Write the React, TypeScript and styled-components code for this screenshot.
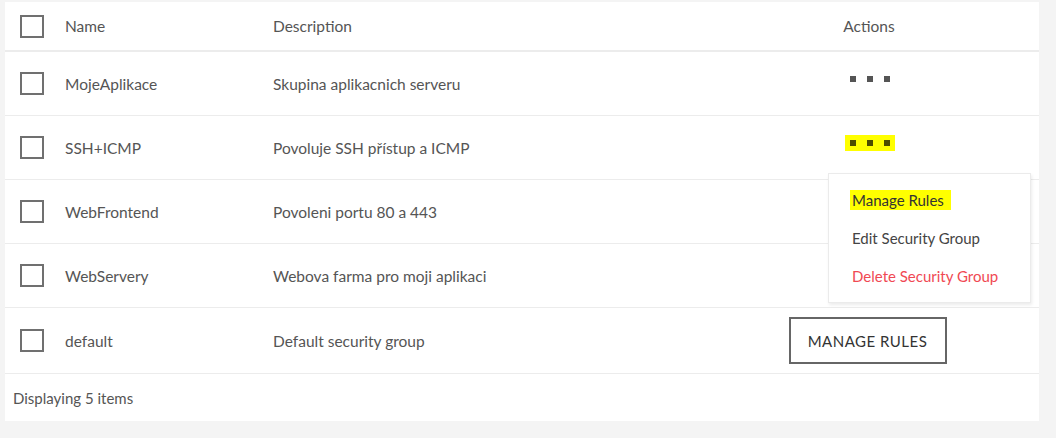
import React from "react";
import styled, { createGlobalStyle } from "styled-components";

const Global = createGlobalStyle`
  html, body { margin: 0; padding: 0; background: #f4f4f4; }
  body { font-family: Lato, "Open Sans", "Liberation Sans", sans-serif; color: #555; }
  * { box-sizing: border-box; }
`;

const Panel = styled.div`
  position: relative;
  margin: 2px 0 0 5px;
  width: 1034px;
  background: #fff;
`;

const Row = styled.div<{ $head?: boolean; $tall?: boolean }>`
  display: grid;
  grid-template-columns: 45px 208px 1fr 188px;
  align-items: center;
  padding: 0 76px 0 15px;
  height: ${(p) => (p.$head ? 50 : p.$tall ? 66 : 64)}px;
  border-bottom: ${(p) => (p.$head ? 2 : 1)}px solid #ececec;
  font-size: 15.5px;
`;

const Check = styled.span`
  display: block;
  width: 24px;
  height: 23px;
  border: 2px solid #707070;
`;

const Cell = styled.div`
  white-space: nowrap;
`;

const ActionCell = styled.div`
  display: flex;
  justify-content: center;
  align-items: center;
`;

const Dots = styled.span<{ $hl?: boolean }>`
  display: inline-flex;
  gap: 11px;
  padding: 5px 5px;
  margin: -9px 0 0 2px;
  background: ${(p) => (p.$hl ? "#ffff00" : "transparent")};
`;

const Dot = styled.span<{ $hl?: boolean }>`
  width: 6px;
  height: 6px;
  background: ${(p) => (p.$hl ? "#4d4d00" : "#555")};
`;

const Button = styled.button`
  width: 158px;
  height: 47px;
  border: 2px solid #666;
  background: #fff;
  font-family: inherit;
  font-size: 15px;
  color: #333;
  letter-spacing: 0.5px;
  text-transform: uppercase;
  margin-left: -3px;
`;

const Footer = styled.div`
  height: 47px;
  display: flex;
  align-items: center;
  padding-left: 8px;
  font-size: 15px;
`;

const Menu = styled.div`
  position: absolute;
  left: 823px;
  top: 171px;
  width: 203px;
  padding: 7px 0;
  background: #fff;
  border: 1px solid #ebebeb;
  box-shadow: 1px 2px 3px rgba(0, 0, 0, 0.08);
`;

const MenuItem = styled.div<{ $danger?: boolean }>`
  height: 38px;
  display: flex;
  align-items: center;
  padding-left: 23px;
  font-size: 15px;
  color: ${(p) => (p.$danger ? "#f04953" : "#444")};
`;

const Mark = styled.span`
  background: #ffff00;
  padding: 1px 7px 1px 2px;
  margin-left: -2px;
  color: #333;
`;

const rows = [
  { name: "MojeAplikace", desc: "Skupina aplikacnich serveru", action: "dots" },
  { name: "SSH+ICMP", desc: "Povoluje SSH přístup a ICMP", action: "dotsHl" },
  { name: "WebFrontend", desc: "Povoleni portu 80 a 443", action: "" },
  { name: "WebServery", desc: "Webova farma pro moji aplikaci", action: "" },
  { name: "default", desc: "Default security group", action: "button" },
];

function DotsBtn({ hl }: { hl?: boolean }) {
  return (
    <Dots $hl={hl}>
      <Dot $hl={hl} />
      <Dot $hl={hl} />
      <Dot $hl={hl} />
    </Dots>
  );
}

export default function App() {
  return (
    <>
      <Global />
      <Panel>
        <Row $head>
          <Check />
          <Cell>Name</Cell>
          <Cell>Description</Cell>
          <ActionCell>Actions</ActionCell>
        </Row>
        {rows.map((r) => (
          <Row key={r.name} $tall={r.action === "button"}>
            <Check />
            <Cell>{r.name}</Cell>
            <Cell>{r.desc}</Cell>
            <ActionCell>
              {r.action === "dots" && <DotsBtn />}
              {r.action === "dotsHl" && <DotsBtn hl />}
              {r.action === "button" && <Button>Manage Rules</Button>}
            </ActionCell>
          </Row>
        ))}
        <Footer>Displaying 5 items</Footer>
        <Menu>
          <MenuItem>
            <Mark>Manage Rules</Mark>
          </MenuItem>
          <MenuItem>Edit Security Group</MenuItem>
          <MenuItem $danger>Delete Security Group</MenuItem>
        </Menu>
      </Panel>
    </>
  );
}
